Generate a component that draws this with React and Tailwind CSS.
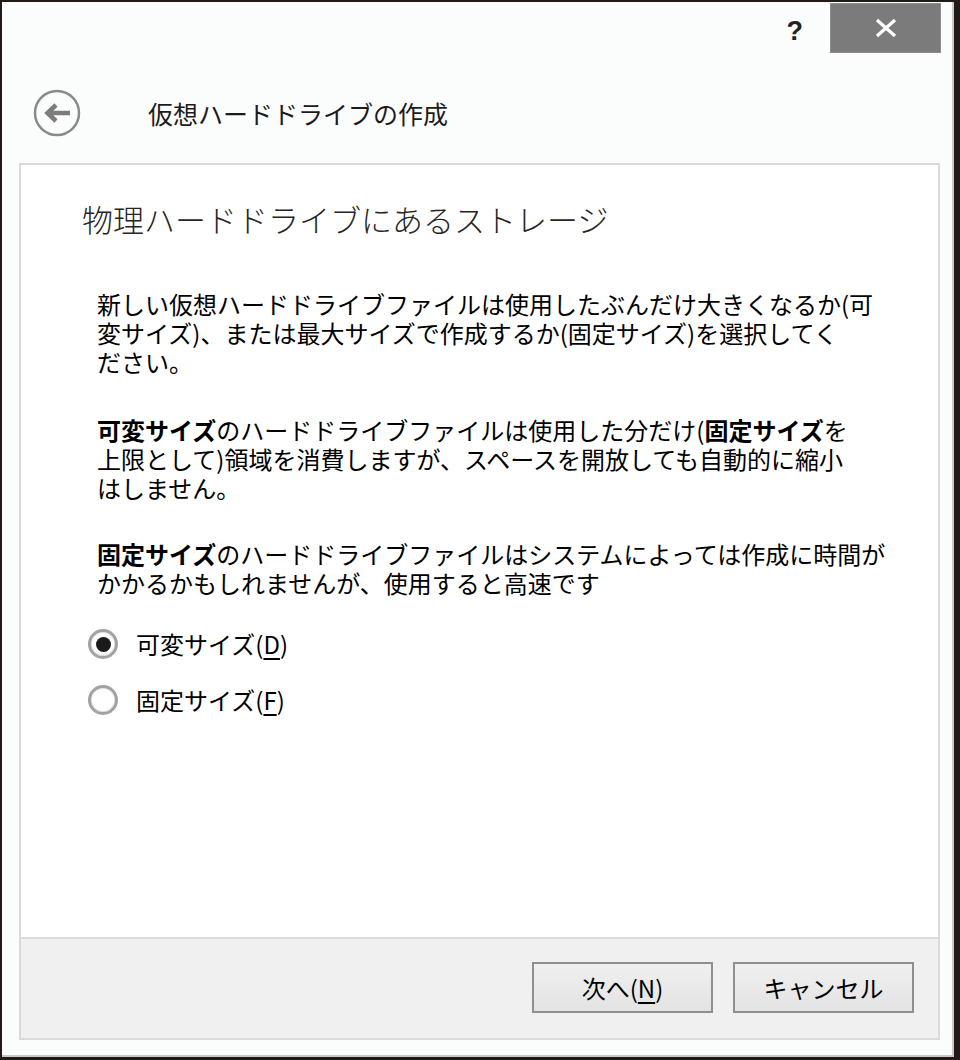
import React, { useState } from 'react';

const jp = { fontFamily: '"Noto Sans CJK JP", "Noto Sans", sans-serif' };

function BackIcon() {
  return (
    <svg width="50" height="50" viewBox="0 0 50 50">
      <circle cx="25" cy="25" r="22" fill="none" stroke="#8a8a8a" strokeWidth="2.5" />
      <path d="M38 25 H16 M24 17 L15.5 25 L24 33" fill="none" stroke="#7c7c7c" strokeWidth="4.5" strokeLinecap="butt" strokeLinejoin="miter" />
    </svg>
  );
}

function Radio({ checked, label, mnemonic, onClick }) {
  return (
    <button onClick={onClick} className="flex items-center gap-[18px] h-[34px] text-[24px] leading-[34px] text-black" style={jp}>
      <span className="w-[30px] h-[30px] rounded-full border-[3px] border-[#a2a2a2] bg-white flex items-center justify-center shadow-[inset_0_0_0_1px_#e2e2e2]">
        {checked && <span className="w-[15px] h-[15px] rounded-full bg-[#1a1a1a]" />}
      </span>
      <span className="whitespace-nowrap">
        {label}(<span className="underline underline-offset-4">{mnemonic}</span>)
      </span>
    </button>
  );
}

function Button({ children }) {
  return (
    <button className="w-[181px] h-[51px] border-2 border-[#8f8f8f] bg-gradient-to-b from-[#f0f0f0] to-[#e3e3e3] text-[24px] text-black flex items-center justify-center" style={jp}>
      {children}
    </button>
  );
}

export default function App() {
  const [mode, setMode] = useState('dynamic');

  return (
    <div className="w-[960px] h-[1060px] bg-[#221a18] pt-[2px] pl-[2px] pr-[6px] pb-[3px]">
      <div className="h-full flex flex-col bg-[#fbfcfc] border-r-2 border-b-2 border-[#c9c9c9]">
        <div className="h-[55px] flex justify-end items-start pr-[11px]">
          <span className="mt-[12px] mr-[27px] text-[27px] font-bold text-[#222] leading-[34px]" style={{ fontFamily: '"Liberation Sans", sans-serif' }}>?</span>
          <button className="mt-[1px] w-[111px] h-[50px] bg-[#7b7b7b] border border-[#8e8e8e] flex items-center justify-center">
            <svg width="22" height="20" viewBox="0 0 22 20">
              <path d="M2 2 L20 18 M20 2 L2 18" stroke="#fff" strokeWidth="3.2" />
            </svg>
          </button>
        </div>

        <div className="h-[106px] flex items-start pt-[31px]">
          <div className="ml-[30px]">
            <BackIcon />
          </div>
          <h1 className="ml-[66px] mt-[8px] text-[25px] leading-[34px] text-[#1b1b1b] whitespace-nowrap" style={jp}>仮想ハードドライブの作成</h1>
        </div>

        <div className="ml-[17px] mr-[12px] h-[877px] flex flex-col border-2 border-[#dadada]">
          <div className="flex-1 bg-white pt-[34px] pl-[61px]">
            <h2 className="text-[31px] leading-[40px] text-[#262626] font-light whitespace-nowrap" style={jp}>物理ハードドライブにあるストレージ</h2>

            <div className="pl-[15px] text-[24px] leading-[29px] text-black whitespace-nowrap" style={jp}>
              <p className="mt-[50px]">
                新しい仮想ハードドライブファイルは使用したぶんだけ大きくなるか(可<br />
                変サイズ)、または最大サイズで作成するか(固定サイズ)を選択してく<br />
                ださい。
              </p>
              <p className="mt-[39px]">
                <b className="font-bold">可変サイズ</b>のハードドライブファイルは使用した分だけ(<b className="font-bold">固定サイズ</b>を<br />
                上限として)領域を消費しますが、スペースを開放しても自動的に縮小<br />
                はしません。
              </p>
              <p className="mt-[37px]">
                <b className="font-bold">固定サイズ</b>のハードドライブファイルはシステムによっては作成に時間が<br />
                かかるかもしれませんが、使用すると高速です
              </p>
            </div>

            <div className="mt-[30px] ml-[6px] flex flex-col gap-[22px]">
              <Radio checked={mode === 'dynamic'} label="可変サイズ" mnemonic="D" onClick={() => setMode('dynamic')} />
              <Radio checked={mode === 'fixed'} label="固定サイズ" mnemonic="F" onClick={() => setMode('fixed')} />
            </div>
          </div>

          <div className="h-[101px] bg-[#f0f0f0] border-t-2 border-[#dcdcdc] flex justify-end items-start pt-[23px] pr-[24px] gap-[20px]">
            <Button>次へ(<span className="underline underline-offset-4">N</span>)</Button>
            <Button>キャンセル</Button>
          </div>
        </div>
      </div>
    </div>
  );
}
